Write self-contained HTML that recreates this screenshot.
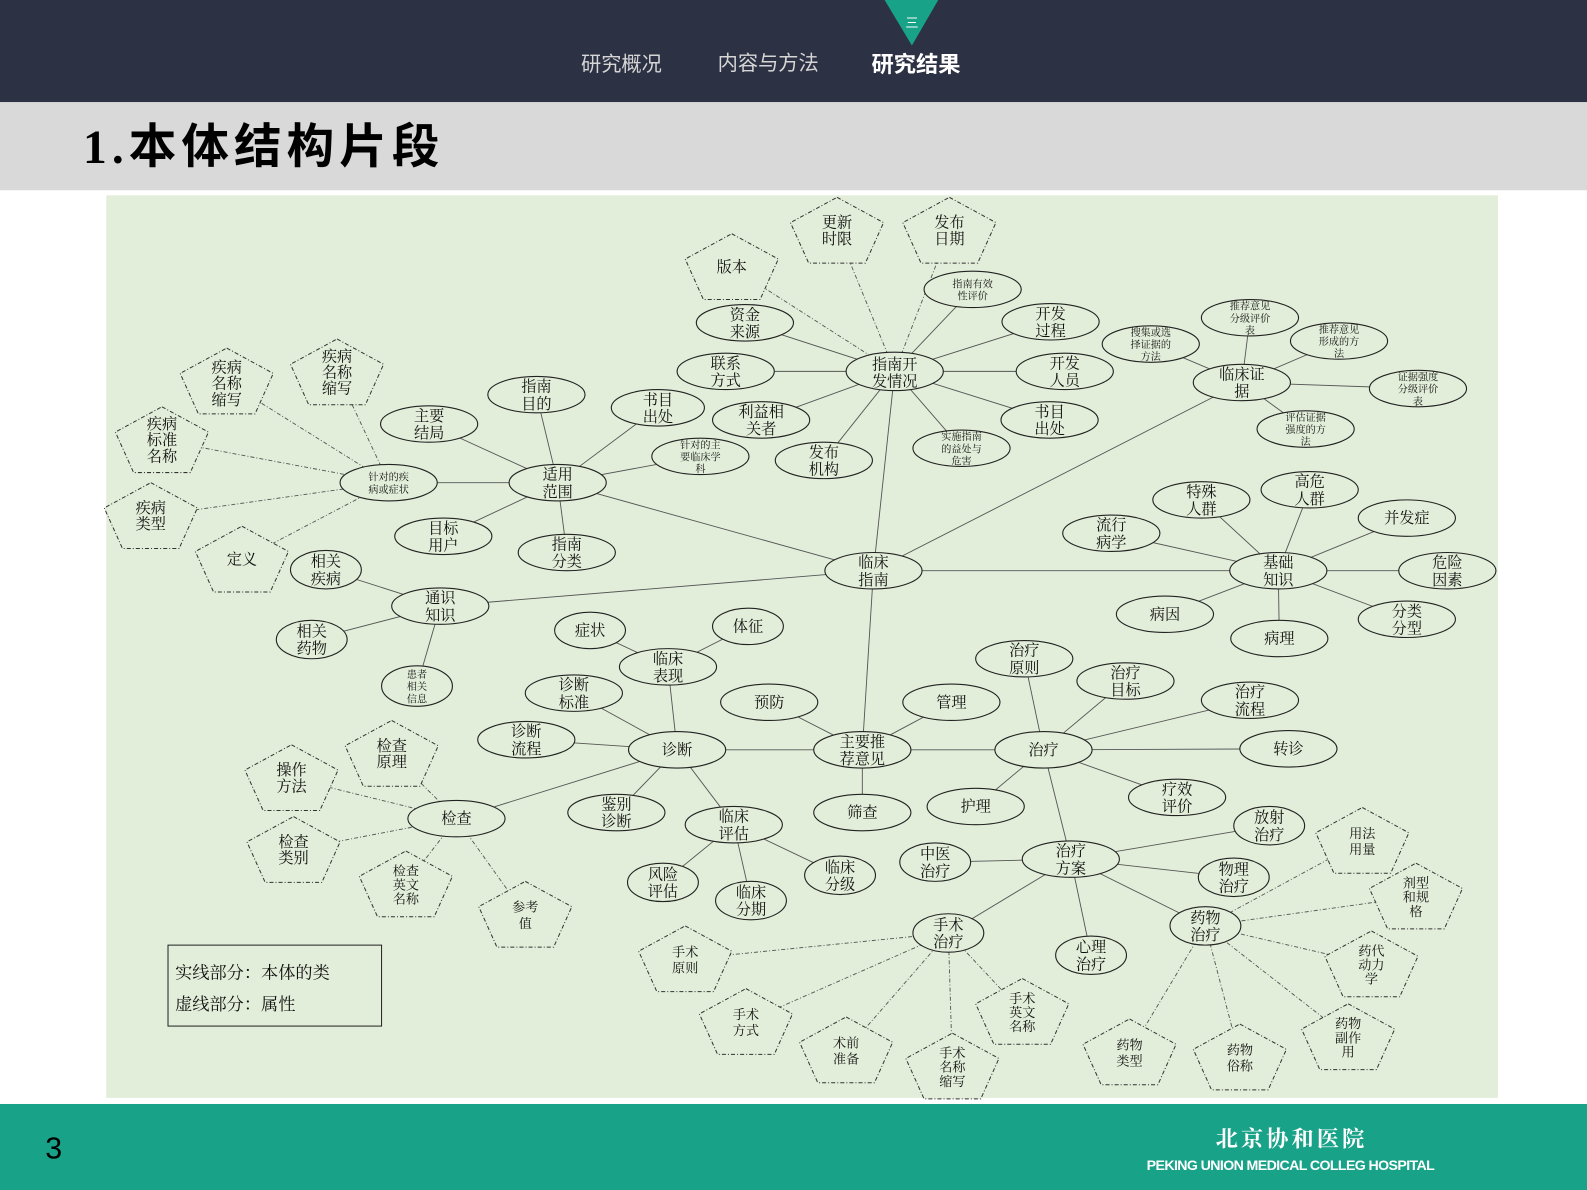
<!DOCTYPE html>
<html><head><meta charset="utf-8"><style>
html,body{margin:0;padding:0;width:1587px;height:1190px;overflow:hidden;background:#fff}
svg{display:block}
text{font-family:"Liberation Serif","Noto Serif CJK SC",serif;font-size:15px;text-anchor:middle;fill:#111}
.s text{font-size:10px}
ellipse{fill:#e2eed9;stroke:#222;stroke-width:1.1}
polygon{fill:#e2eed9;stroke:#333;stroke-width:1;stroke-dasharray:4 2 1 2}
.l line{stroke:#555;stroke-width:0.9}
.d line{stroke:#555;stroke-width:0.9;stroke-dasharray:4 2 1 2}
</style></head><body>
<svg width="1587" height="1190" viewBox="0 0 1568 1176" preserveAspectRatio="none" xmlns="http://www.w3.org/2000/svg">
<rect x="0" y="0" width="1568" height="101" fill="#2c3144"/>
<polygon points="874,0 927,0 901,45" style="fill:#18a288;stroke:none"/>
<text x="901" y="27" style="fill:#fff;font-size:13px;font-family:'Liberation Sans','Noto Sans CJK SC',sans-serif">三</text>
<text x="614" y="70" style="fill:#d6d6d6;font-size:20px;font-family:'Liberation Sans','Noto Sans CJK SC',sans-serif">研究概况</text>
<text x="759" y="69" style="fill:#d6d6d6;font-size:20px;font-family:'Liberation Sans','Noto Sans CJK SC',sans-serif">内容与方法</text>
<text x="905" y="71" style="fill:#fff;font-size:22px;font-weight:bold;font-family:'Liberation Sans','Noto Sans CJK SC',sans-serif">研究结果</text>
<rect x="0" y="101" width="1568" height="87" fill="#d9d9d9"/>
<text x="82" y="161" style="text-anchor:start;font-size:47px;font-weight:bold;fill:#000;letter-spacing:5px;font-family:'Liberation Serif','Noto Sans CJK SC',sans-serif">1.本体结构片段</text>
<rect x="105" y="193" width="1375" height="892" fill="#e2eed9"/>
<rect x="0" y="1091" width="1568" height="85" fill="#18a288"/>
<text x="53" y="1145" style="font-size:30px;fill:#000;font-family:'Liberation Sans',sans-serif">3</text>
<text x="1276" y="1133" style="fill:#fff;font-size:22px;font-weight:bold;letter-spacing:3px">北京协和医院</text>
<text x="1275" y="1156" style="fill:#fff;font-size:14px;font-weight:bold;font-family:'Liberation Sans',sans-serif;letter-spacing:-0.6px">PEKING UNION MEDICAL COLLEG HOSPITAL</text>

<g class="l">
<line x1="863" y1="564" x2="884" y2="367"/><line x1="863" y1="564" x2="551" y2="477"/><line x1="863" y1="564" x2="435" y2="599"/><line x1="863" y1="564" x2="1263" y2="564"/><line x1="863" y1="564" x2="1227" y2="378"/><line x1="863" y1="564" x2="852" y2="741"/>
<line x1="884" y1="367" x2="736" y2="319"/><line x1="884" y1="367" x2="717" y2="367"/><line x1="884" y1="367" x2="752" y2="415"/><line x1="884" y1="367" x2="814" y2="455"/><line x1="884" y1="367" x2="961" y2="286"/><line x1="884" y1="367" x2="1038" y2="318"/><line x1="884" y1="367" x2="1052" y2="367"/><line x1="884" y1="367" x2="1037" y2="415"/><line x1="884" y1="367" x2="950" y2="443"/>
<line x1="1227" y1="378" x2="1137" y2="340"/><line x1="1227" y1="378" x2="1235" y2="314"/><line x1="1227" y1="378" x2="1323" y2="337"/><line x1="1227" y1="378" x2="1401" y2="384"/><line x1="1227" y1="378" x2="1290" y2="424"/>
<line x1="551" y1="477" x2="424" y2="419"/><line x1="551" y1="477" x2="530" y2="390"/><line x1="551" y1="477" x2="650" y2="403"/><line x1="551" y1="477" x2="692" y2="451"/><line x1="551" y1="477" x2="438" y2="530"/><line x1="551" y1="477" x2="560" y2="546"/><line x1="551" y1="477" x2="384" y2="477"/>
<line x1="435" y1="599" x2="322" y2="563"/><line x1="435" y1="599" x2="308" y2="632"/><line x1="435" y1="599" x2="412" y2="678"/>
<line x1="1263" y1="564" x2="1187" y2="494"/><line x1="1263" y1="564" x2="1294" y2="484"/><line x1="1263" y1="564" x2="1390" y2="512"/><line x1="1263" y1="564" x2="1098" y2="527"/><line x1="1263" y1="564" x2="1430" y2="564"/><line x1="1263" y1="564" x2="1151" y2="607"/><line x1="1263" y1="564" x2="1264" y2="631"/><line x1="1263" y1="564" x2="1390" y2="612"/>
<line x1="852" y1="741" x2="669" y2="741"/><line x1="852" y1="741" x2="760" y2="694"/><line x1="852" y1="741" x2="940" y2="694"/><line x1="852" y1="741" x2="1031" y2="741"/><line x1="852" y1="741" x2="852" y2="803"/>
<line x1="669" y1="741" x2="660" y2="659"/><line x1="669" y1="741" x2="567" y2="685"/><line x1="669" y1="741" x2="520" y2="731"/><line x1="669" y1="741" x2="451" y2="809"/><line x1="669" y1="741" x2="609" y2="803"/><line x1="669" y1="741" x2="725" y2="815"/>
<line x1="660" y1="659" x2="583" y2="623"/><line x1="660" y1="659" x2="739" y2="619"/>
<line x1="725" y1="815" x2="655" y2="872"/><line x1="725" y1="815" x2="742" y2="890"/><line x1="725" y1="815" x2="830" y2="865"/>
<line x1="1031" y1="741" x2="1012" y2="651"/><line x1="1031" y1="741" x2="1112" y2="673"/><line x1="1031" y1="741" x2="1235" y2="692"/><line x1="1031" y1="741" x2="1273" y2="740"/><line x1="1031" y1="741" x2="1163" y2="788"/><line x1="1031" y1="741" x2="964" y2="797"/><line x1="1031" y1="741" x2="1058" y2="849"/>
<line x1="1058" y1="849" x2="1254" y2="816"/><line x1="1058" y1="849" x2="924" y2="852"/><line x1="1058" y1="849" x2="1219" y2="867"/><line x1="1058" y1="849" x2="937" y2="922"/><line x1="1058" y1="849" x2="1078" y2="944"/><line x1="1058" y1="849" x2="1191" y2="915"/>
</g>
<g class="d">
<line x1="884" y1="367" x2="827" y2="228"/><line x1="884" y1="367" x2="938" y2="228"/><line x1="884" y1="367" x2="723" y2="264"/>
<line x1="384" y1="477" x2="224" y2="377"/><line x1="384" y1="477" x2="333" y2="368"/><line x1="384" y1="477" x2="160" y2="435"/><line x1="384" y1="477" x2="149" y2="510"/><line x1="384" y1="477" x2="239" y2="553"/>
<line x1="451" y1="809" x2="387" y2="745"/><line x1="451" y1="809" x2="288" y2="769"/><line x1="451" y1="809" x2="290" y2="840"/><line x1="451" y1="809" x2="401" y2="874"/><line x1="451" y1="809" x2="519" y2="904"/>
<line x1="937" y1="922" x2="677" y2="948"/><line x1="937" y1="922" x2="737" y2="1010"/><line x1="937" y1="922" x2="836" y2="1038"/><line x1="937" y1="922" x2="941" y2="1054"/><line x1="937" y1="922" x2="1010" y2="1000"/>
<line x1="1191" y1="915" x2="1116" y2="1040"/><line x1="1191" y1="915" x2="1225" y2="1045"/><line x1="1191" y1="915" x2="1332" y2="1025"/><line x1="1191" y1="915" x2="1355" y2="953"/><line x1="1191" y1="915" x2="1399" y2="886"/><line x1="1191" y1="915" x2="1346" y2="831"/>
</g>

<g transform="translate(884,367)"><ellipse rx="48" ry="19"/><text y="-2">指南开</text><text y="15">发情况</text></g>
<g transform="translate(736,319)"><ellipse rx="48" ry="18"/><text y="-3">资金</text><text y="14">来源</text></g>
<g transform="translate(717,367)"><ellipse rx="48" ry="18"/><text y="-3">联系</text><text y="14">方式</text></g>
<g transform="translate(752,415)"><ellipse rx="48" ry="18"/><text y="-3">利益相</text><text y="14">关者</text></g>
<g transform="translate(814,455)"><ellipse rx="48" ry="18"/><text y="-3">发布</text><text y="14">机构</text></g>
<g transform="translate(1038,318)"><ellipse rx="48" ry="18"/><text y="-3">开发</text><text y="14">过程</text></g>
<g transform="translate(1052,367)"><ellipse rx="48" ry="18"/><text y="-3">开发</text><text y="14">人员</text></g>
<g transform="translate(1037,415)"><ellipse rx="48" ry="18"/><text y="-3">书目</text><text y="14">出处</text></g>
<g transform="translate(1227,378)"><ellipse rx="48" ry="18"/><text y="-3">临床证</text><text y="14">据</text></g>
<g transform="translate(551,477)"><ellipse rx="48" ry="18"/><text y="-3">适用</text><text y="14">范围</text></g>
<g transform="translate(424,419)"><ellipse rx="48" ry="18"/><text y="-3">主要</text><text y="14">结局</text></g>
<g transform="translate(530,390)"><ellipse rx="48" ry="18"/><text y="-3">指南</text><text y="14">目的</text></g>
<g transform="translate(650,403)"><ellipse rx="46" ry="18"/><text y="-3">书目</text><text y="14">出处</text></g>
<g transform="translate(438,530)"><ellipse rx="48" ry="18"/><text y="-3">目标</text><text y="14">用户</text></g>
<g transform="translate(560,546)"><ellipse rx="48" ry="18"/><text y="-3">指南</text><text y="14">分类</text></g>
<g transform="translate(863,564)"><ellipse rx="48" ry="18"/><text y="-3">临床</text><text y="14">指南</text></g>
<g transform="translate(435,599)"><ellipse rx="48" ry="18"/><text y="-3">通识</text><text y="14">知识</text></g>
<g transform="translate(322,563)"><ellipse rx="35" ry="19"/><text y="-3">相关</text><text y="14">疾病</text></g>
<g transform="translate(308,632)"><ellipse rx="35" ry="19"/><text y="-3">相关</text><text y="14">药物</text></g>
<g transform="translate(1263,564)"><ellipse rx="48" ry="18"/><text y="-3">基础</text><text y="14">知识</text></g>
<g transform="translate(1187,494)"><ellipse rx="48" ry="18"/><text y="-3">特殊</text><text y="14">人群</text></g>
<g transform="translate(1294,484)"><ellipse rx="48" ry="18"/><text y="-3">高危</text><text y="14">人群</text></g>
<g transform="translate(1390,512)"><ellipse rx="48" ry="18"/><text y="5">并发症</text></g>
<g transform="translate(1098,527)"><ellipse rx="48" ry="18"/><text y="-3">流行</text><text y="14">病学</text></g>
<g transform="translate(1430,564)"><ellipse rx="48" ry="18"/><text y="-3">危险</text><text y="14">因素</text></g>
<g transform="translate(1151,607)"><ellipse rx="48" ry="18"/><text y="5">病因</text></g>
<g transform="translate(1264,631)"><ellipse rx="48" ry="18"/><text y="5">病理</text></g>
<g transform="translate(1390,612)"><ellipse rx="48" ry="18"/><text y="-3">分类</text><text y="14">分型</text></g>
<g transform="translate(852,741)"><ellipse rx="48" ry="18"/><text y="-3">主要推</text><text y="14">荐意见</text></g>
<g transform="translate(583,623)"><ellipse rx="35" ry="18"/><text y="5">症状</text></g>
<g transform="translate(739,619)"><ellipse rx="35" ry="18"/><text y="5">体征</text></g>
<g transform="translate(660,659)"><ellipse rx="48" ry="18"/><text y="-3">临床</text><text y="14">表现</text></g>
<g transform="translate(567,685)"><ellipse rx="48" ry="18"/><text y="-3">诊断</text><text y="14">标准</text></g>
<g transform="translate(760,694)"><ellipse rx="48" ry="18"/><text y="5">预防</text></g>
<g transform="translate(940,694)"><ellipse rx="48" ry="18"/><text y="5">管理</text></g>
<g transform="translate(520,731)"><ellipse rx="48" ry="18"/><text y="-3">诊断</text><text y="14">流程</text></g>
<g transform="translate(669,741)"><ellipse rx="48" ry="18"/><text y="5">诊断</text></g>
<g transform="translate(1012,651)"><ellipse rx="48" ry="18"/><text y="-3">治疗</text><text y="14">原则</text></g>
<g transform="translate(1112,673)"><ellipse rx="48" ry="18"/><text y="-3">治疗</text><text y="14">目标</text></g>
<g transform="translate(1235,692)"><ellipse rx="48" ry="18"/><text y="-3">治疗</text><text y="14">流程</text></g>
<g transform="translate(1031,741)"><ellipse rx="48" ry="18"/><text y="5">治疗</text></g>
<g transform="translate(1273,740)"><ellipse rx="48" ry="18"/><text y="5">转诊</text></g>
<g transform="translate(451,809)"><ellipse rx="48" ry="18"/><text y="5">检查</text></g>
<g transform="translate(609,803)"><ellipse rx="48" ry="18"/><text y="-3">鉴别</text><text y="14">诊断</text></g>
<g transform="translate(725,815)"><ellipse rx="48" ry="18"/><text y="-3">临床</text><text y="14">评估</text></g>
<g transform="translate(852,803)"><ellipse rx="48" ry="18"/><text y="5">筛查</text></g>
<g transform="translate(964,797)"><ellipse rx="48" ry="18"/><text y="5">护理</text></g>
<g transform="translate(1163,788)"><ellipse rx="48" ry="18"/><text y="-3">疗效</text><text y="14">评价</text></g>
<g transform="translate(1254,816)"><ellipse rx="35" ry="19"/><text y="-3">放射</text><text y="14">治疗</text></g>
<g transform="translate(924,852)"><ellipse rx="35" ry="19"/><text y="-3">中医</text><text y="14">治疗</text></g>
<g transform="translate(1058,849)"><ellipse rx="48" ry="18"/><text y="-3">治疗</text><text y="14">方案</text></g>
<g transform="translate(1219,867)"><ellipse rx="35" ry="19"/><text y="-3">物理</text><text y="14">治疗</text></g>
<g transform="translate(655,872)"><ellipse rx="35" ry="19"/><text y="-3">风险</text><text y="14">评估</text></g>
<g transform="translate(742,890)"><ellipse rx="35" ry="19"/><text y="-3">临床</text><text y="14">分期</text></g>
<g transform="translate(830,865)"><ellipse rx="35" ry="19"/><text y="-3">临床</text><text y="14">分级</text></g>
<g transform="translate(937,922)"><ellipse rx="35" ry="19"/><text y="-3">手术</text><text y="14">治疗</text></g>
<g transform="translate(1078,944)"><ellipse rx="35" ry="19"/><text y="-3">心理</text><text y="14">治疗</text></g>
<g transform="translate(1191,915)"><ellipse rx="35" ry="19"/><text y="-3">药物</text><text y="14">治疗</text></g>

<g class="s">
<g transform="translate(961,286)"><ellipse rx="48" ry="18"/><text y="-2">指南有效</text><text y="10">性评价</text></g>
<g transform="translate(950,443)"><ellipse rx="48" ry="18"/><text y="-8">实施指南</text><text y="4">的益处与</text><text y="16">危害</text></g>
<g transform="translate(1137,340)"><ellipse rx="48" ry="18"/><text y="-8">搜集或选</text><text y="4">择证据的</text><text y="16">方法</text></g>
<g transform="translate(1235,314)"><ellipse rx="48" ry="18"/><text y="-8">推荐意见</text><text y="4">分级评价</text><text y="16">表</text></g>
<g transform="translate(1323,337)"><ellipse rx="48" ry="18"/><text y="-8">推荐意见</text><text y="4">形成的方</text><text y="16">法</text></g>
<g transform="translate(1401,384)"><ellipse rx="48" ry="18"/><text y="-8">证据强度</text><text y="4">分级评价</text><text y="16">表</text></g>
<g transform="translate(1290,424)"><ellipse rx="48" ry="18"/><text y="-8">评估证据</text><text y="4">强度的方</text><text y="16">法</text></g>
<g transform="translate(692,451)"><ellipse rx="48" ry="18"/><text y="-8">针对的主</text><text y="4">要临床学</text><text y="16">科</text></g>
<g transform="translate(384,477)"><ellipse rx="48" ry="18"/><text y="-2">针对的疾</text><text y="10">病或症状</text></g>
<g transform="translate(412,678)"><ellipse rx="35" ry="20"/><text y="-8">患者</text><text y="4">相关</text><text y="16">信息</text></g>
</g>

<g transform="translate(827,228)"><polygon points="0,-33 46,-8 28,32 -28,32 -46,-8"/><text y="-3">更新</text><text y="13">时限</text></g>
<g transform="translate(938,228)"><polygon points="0,-33 46,-8 28,32 -28,32 -46,-8"/><text y="-3">发布</text><text y="13">日期</text></g>
<g transform="translate(723,264)"><polygon points="0,-33 46,-8 28,32 -28,32 -46,-8"/><text y="5">版本</text></g>
<g transform="translate(224,377)"><polygon points="0,-33 46,-8 28,32 -28,32 -46,-8"/><text y="-9">疾病</text><text y="7">名称</text><text y="23">缩写</text></g>
<g transform="translate(333,368)"><polygon points="0,-33 46,-8 28,32 -28,32 -46,-8"/><text y="-11">疾病</text><text y="5">名称</text><text y="21">缩写</text></g>
<g transform="translate(160,435)"><polygon points="0,-33 46,-8 28,32 -28,32 -46,-8"/><text y="-11">疾病</text><text y="5">标准</text><text y="21">名称</text></g>
<g transform="translate(149,510)"><polygon points="0,-33 46,-8 28,32 -28,32 -46,-8"/><text y="-3">疾病</text><text y="13">类型</text></g>
<g transform="translate(239,553)"><polygon points="0,-33 46,-8 28,32 -28,32 -46,-8"/><text y="5">定义</text></g>
<g transform="translate(387,745)"><polygon points="0,-33 46,-8 28,32 -28,32 -46,-8"/><text y="-3">检查</text><text y="13">原理</text></g>
<g transform="translate(288,769)"><polygon points="0,-33 46,-8 28,32 -28,32 -46,-8"/><text y="-3">操作</text><text y="13">方法</text></g>
<g transform="translate(290,840)"><polygon points="0,-33 46,-8 28,32 -28,32 -46,-8"/><text y="-3">检查</text><text y="13">类别</text></g>
<g transform="translate(401,874)"><polygon points="0,-33 46,-8 28,32 -28,32 -46,-8"/><text y="-9" style="font-size:13px">检查</text><text y="5" style="font-size:13px">英文</text><text y="19" style="font-size:13px">名称</text></g>
<g transform="translate(519,904)"><polygon points="0,-33 46,-8 28,32 -28,32 -46,-8"/><text y="-3" style="font-size:13px">参考</text><text y="13" style="font-size:13px">值</text></g>
<g transform="translate(677,948)"><polygon points="0,-33 46,-8 28,32 -28,32 -46,-8"/><text y="-3" style="font-size:13px">手术</text><text y="13" style="font-size:13px">原则</text></g>
<g transform="translate(737,1010)"><polygon points="0,-33 46,-8 28,32 -28,32 -46,-8"/><text y="-3" style="font-size:13px">手术</text><text y="13" style="font-size:13px">方式</text></g>
<g transform="translate(836,1038)"><polygon points="0,-33 46,-8 28,32 -28,32 -46,-8"/><text y="-3" style="font-size:13px">术前</text><text y="13" style="font-size:13px">准备</text></g>
<g transform="translate(941,1054)"><polygon points="0,-33 46,-8 28,32 -28,32 -46,-8"/><text y="-9" style="font-size:13px">手术</text><text y="5" style="font-size:13px">名称</text><text y="19" style="font-size:13px">缩写</text></g>
<g transform="translate(1010,1000)"><polygon points="0,-33 46,-8 28,32 -28,32 -46,-8"/><text y="-9" style="font-size:13px">手术</text><text y="5" style="font-size:13px">英文</text><text y="19" style="font-size:13px">名称</text></g>
<g transform="translate(1116,1040)"><polygon points="0,-33 46,-8 28,32 -28,32 -46,-8"/><text y="-3" style="font-size:13px">药物</text><text y="13" style="font-size:13px">类型</text></g>
<g transform="translate(1225,1045)"><polygon points="0,-33 46,-8 28,32 -28,32 -46,-8"/><text y="-3" style="font-size:13px">药物</text><text y="13" style="font-size:13px">俗称</text></g>
<g transform="translate(1332,1025)"><polygon points="0,-33 46,-8 28,32 -28,32 -46,-8"/><text y="-9" style="font-size:13px">药物</text><text y="5" style="font-size:13px">副作</text><text y="19" style="font-size:13px">用</text></g>
<g transform="translate(1355,953)"><polygon points="0,-33 46,-8 28,32 -28,32 -46,-8"/><text y="-9" style="font-size:13px">药代</text><text y="5" style="font-size:13px">动力</text><text y="19" style="font-size:13px">学</text></g>
<g transform="translate(1399,886)"><polygon points="0,-33 46,-8 28,32 -28,32 -46,-8"/><text y="-9" style="font-size:13px">剂型</text><text y="5" style="font-size:13px">和规</text><text y="19" style="font-size:13px">格</text></g>
<g transform="translate(1346,831)"><polygon points="0,-33 46,-8 28,32 -28,32 -46,-8"/><text y="-3" style="font-size:13px">用法</text><text y="13" style="font-size:13px">用量</text></g>

<rect x="166" y="934" width="211" height="80" fill="#e2eed9" stroke="#222" stroke-width="1"/>
<text x="173" y="967" style="text-anchor:start;font-size:17px">实线部分：本体的类</text>
<text x="173" y="998" style="text-anchor:start;font-size:17px">虚线部分：属性</text>
</svg>
</body></html>
